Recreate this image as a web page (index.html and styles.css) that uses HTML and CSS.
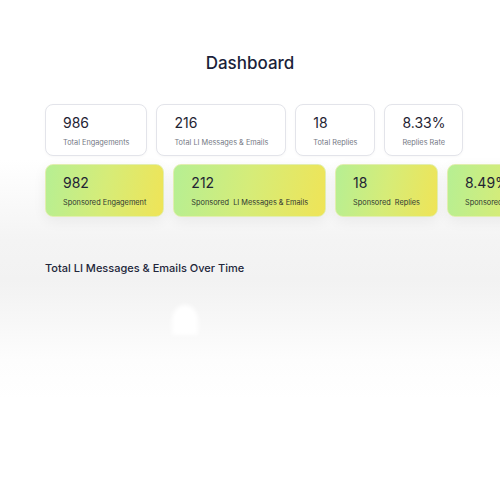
FILE: index.html
```html
<!DOCTYPE html>
<html>
<head>
<meta charset="utf-8">
<link rel="stylesheet" href="styles.css">
</head>
<body>
<div class="page">
  <h1 class="title">Dashboard</h1>
  <div class="row">
    <div class="card plain"><div class="num">986</div><div class="label">Total Engagements</div></div>
    <div class="card plain"><div class="num">216</div><div class="label">Total LI Messages &amp; Emails</div></div>
    <div class="card plain"><div class="num">18</div><div class="label">Total Replies</div></div>
    <div class="card plain"><div class="num">8.33%</div><div class="label">Replies Rate</div></div>
  </div>
  <div class="row row2">
    <div class="card grad"><div class="num">982</div><div class="label">Sponsored Engagement</div></div>
    <div class="card grad"><div class="num">212</div><div class="label">Sponsored&nbsp; LI Messages &amp; Emails</div></div>
    <div class="card grad"><div class="num">18</div><div class="label">Sponsored&nbsp; Replies</div></div>
    <div class="card grad"><div class="num">8.49%</div><div class="label">Sponsored&nbsp; Replies Rate</div></div>
  </div>
  <h2 class="section">Total LI Messages &amp; Emails Over Time</h2>
  <div class="chart"><div class="bump"></div></div>
</div>
</body>
</html>
```
FILE: styles.css
```css
html, body {
  margin: 0;
  padding: 0;
  width: 500px;
  height: 500px;
  overflow: hidden;
}
body {
  font-family: Inter, "Noto Sans", sans-serif;
  background: linear-gradient(180deg, #ffffff 0px, #ffffff 160px, #f4f4f4 240px, #f2f2f2 280px, #f7f7f7 320px, #fdfdfd 360px, #ffffff 400px);
}
.page {
  padding: 51px 0 0 45px;
}
.title {
  margin: 0 0 29px -45px;
  text-align: center;
  font-size: 17px;
  font-weight: 500;
  color: #1b1f3a;
  line-height: 24px;
}
.row {
  display: flex;
  gap: 9px;
  white-space: nowrap;
}
.row2 {
  margin-top: 8px;
}
.card {
  flex-shrink: 0;
  box-sizing: border-box;
  padding: 9px 17px 0 17px;
  border-radius: 8px;
}
.plain {
  height: 52px;
  background: #ffffff;
  border: 1px solid #e3e4ea;
  box-shadow: 0 1px 3px rgba(0,0,0,0.03);
}
.grad {
  height: 53px;
  padding-top: 9px;
  background: linear-gradient(100deg, #b6ef93 0%, #d6ec78 50%, #efe457 100%);
  border: 1px solid #e2eeb0;
  box-shadow: 0 4px 14px rgba(0,0,0,0.06);
}
.num {
  font-size: 14px;
  line-height: 18px;
  color: #1f2333;
  font-weight: 400;
}
.label {
  margin-top: 6px;
  font-size: 7.35px;
  line-height: 10px;
  color: #747884;
}
.grad .label {
  color: #2e3530;
}
.section {
  margin: 44px 0 0 0;
  font-size: 11px;
  font-weight: 500;
  color: #22263a;
  line-height: 14px;
}
.chart {
  position: relative;
  height: 150px;
}
.bump {
  position: absolute;
  left: 127px;
  top: 30px;
  width: 26px;
  height: 30px;
  border-radius: 50% 50% 0 0;
  background: #ffffff;
  filter: blur(2px);
}
```
